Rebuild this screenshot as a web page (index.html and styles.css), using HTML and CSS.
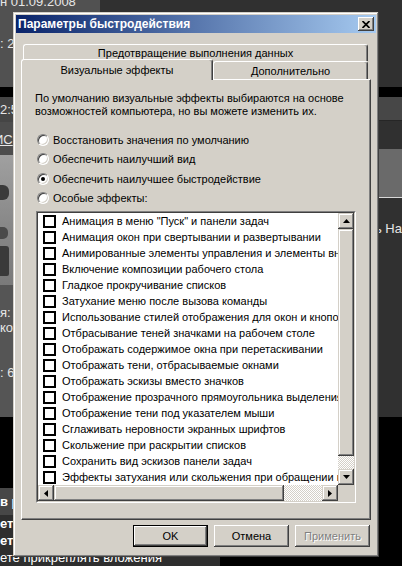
FILE: index.html
```html
<!DOCTYPE html>
<html lang="ru">
<head>
  <meta charset="UTF-8" />
  <meta name="viewport" content="width=device-width, initial-scale=1.0" />
  <title>Параметры быстродействия</title>
  <link rel="stylesheet" href="styles.css">
</head>
<body>
  <!-- окно программы под диалогом -->
  <div class="desk">
    <div class="desk-top">
      <div class="side">
        <div class="s-head"><span class="s-date">н 01.09.2008</span><span class="s-val">: 2</span></div>
        <div class="s-black"></div>
        <div class="s-time">2:5</div>
        <div class="s-link"><u>ИС</u></div>
        <div class="s-pic"><span class="blob b1"></span><span class="blob b2"></span><span class="blob b3"></span></div>
        <div class="s-info">я:<br>ко<br><br><br>: 6</div>
      </div>
      <div class="main">
        <div class="m-head"></div>
        <div class="m-black"></div>
        <div class="m-bar"></div>
        <div class="m-gap"></div>
        <div class="m-block"></div>
        <div class="m-text">ть На</div>
      </div>
    </div>
    <div class="desk-bottom">
      <div class="side wide">
        <div class="s-black tall"></div>
        <div class="s-strip">в р</div>
        <div class="s-lines"><b>ет</b><b>ет</b><span>ете прикреплять вложения</span></div>
      </div>
      <div class="main dark"></div>
    </div>
  </div>

  <div class="dialog">
    <div class="titlebar">
      <span class="title">Параметры быстродействия</span>
      <span class="close-btn">
        <svg width="8" height="7" viewBox="0 0 8 7"><path d="M0.5 0 L7.5 7 M7.5 0 L0.5 7" stroke="#000" stroke-width="1.7"/></svg>
      </span>
    </div>

    <div class="tabs">
      <div class="tab-row back">
        <div class="tab">Предотвращение выполнения данных</div>
      </div>
      <div class="tab-row front">
        <div class="tab active">Визуальные эффекты</div>
        <div class="tab">Дополнительно</div>
      </div>
    </div>

    <div class="panel">
      <p class="intro">По умолчанию визуальные эффекты выбираются на основе<br>возможностей компьютера, но вы можете изменить их.</p>

      <div class="radios">
        <div class="radio"><span class="radio-mark"></span>Восстановить значения по умолчанию</div>
        <div class="radio"><span class="radio-mark"></span>Обеспечить наилучший вид</div>
        <div class="radio checked"><span class="radio-mark"></span>Обеспечить наилучшее быстродействие</div>
        <div class="radio"><span class="radio-mark"></span>Особые эффекты:</div>
      </div>

      <div class="listbox">
        <div class="list-frame">
          <div class="items">
            <div class="item"><span class="check"></span>Анимация в меню "Пуск" и панели задач</div>
            <div class="item"><span class="check"></span>Анимация окон при свертывании и развертывании</div>
            <div class="item"><span class="check"></span>Анимированные элементы управления и элементы внутри окна</div>
            <div class="item"><span class="check"></span>Включение композиции рабочего стола</div>
            <div class="item"><span class="check"></span>Гладкое прокручивание списков</div>
            <div class="item"><span class="check"></span>Затухание меню после вызова команды</div>
            <div class="item"><span class="check"></span>Использование стилей отображения для окон и кнопок</div>
            <div class="item"><span class="check"></span>Отбрасывание теней значками на рабочем столе</div>
            <div class="item"><span class="check"></span>Отображать содержимое окна при перетаскивании</div>
            <div class="item"><span class="check"></span>Отображать тени, отбрасываемые окнами</div>
            <div class="item"><span class="check"></span>Отображать эскизы вместо значков</div>
            <div class="item"><span class="check"></span>Отображение прозрачного прямоугольника выделения</div>
            <div class="item"><span class="check"></span>Отображение тени под указателем мыши</div>
            <div class="item"><span class="check"></span>Сглаживать неровности экранных шрифтов</div>
            <div class="item"><span class="check"></span>Скольжение при раскрытии списков</div>
            <div class="item"><span class="check"></span>Сохранить вид эскизов панели задач</div>
            <div class="item"><span class="check"></span>Эффекты затухания или скольжения при обращении к подсказкам</div>
          </div>

          <div class="vscroll">
            <span class="sb-btn"><svg width="7" height="4" viewBox="0 0 7 4"><path d="M3.5 0 L7 4 L0 4 Z"/></svg></span>
            <span class="sb-thumb v"></span>
            <span class="sb-track"></span>
            <span class="sb-btn"><svg width="7" height="4" viewBox="0 0 7 4"><path d="M0 0 L7 0 L3.5 4 Z"/></svg></span>
          </div>

          <div class="hscroll">
            <span class="sb-btn"><svg width="4" height="7" viewBox="0 0 4 7"><path d="M0 3.5 L4 0 L4 7 Z"/></svg></span>
            <span class="sb-thumb h"></span>
            <span class="sb-track"></span>
            <span class="sb-btn"><svg width="4" height="7" viewBox="0 0 4 7"><path d="M0 0 L4 3.5 L0 7 Z"/></svg></span>
          </div>

          <div class="sb-corner"></div>
        </div>
      </div>
    </div>

    <div class="buttons">
      <button class="btn default">OK</button>
      <button class="btn">Отмена</button>
      <button class="btn" disabled>Применить</button>
    </div>
  </div>
</body>
</html>
```

FILE: styles.css
```css
* { box-sizing: border-box; }

body {
  margin: 0;
  width: 402px;
  height: 566px;
  overflow: hidden;
  position: relative;
  background: #303030;
  font-family: "Liberation Sans", Arial, sans-serif;
}

/* ---- программа на заднем плане ---- */

.desk {
  display: flex;
  flex-direction: column;
  height: 566px;
  color: #e6e6e6;
  font-size: 13px;
}

.desk-top, .desk-bottom { display: flex; }

.side { width: 110px; display: flex; flex-direction: column; }
.side.wide { width: 220px; }
.main { flex: 1; display: flex; flex-direction: column; }
.main.dark { background: #000; }

.s-head {
  height: 87px;
  background: #515151;
  display: flex;
  flex-direction: column;
  line-height: 15px;
  white-space: nowrap;
  overflow: hidden;
}
.s-date { margin-top: -6px; }
.s-val { margin-top: 27px; }

.s-black { height: 10px; background: #000; }
.s-black.tall { height: 71px; }

.s-time { height: 25px; background: #454545; line-height: 25px; }

.s-link { height: 33px; background: #4d4d4d; line-height: 36px; padding-left: 0; }
.s-link u { margin-left: -6px; }

.s-pic {
  height: 130px;
  background: linear-gradient(#a0a0a0, #858585 60%, #7a7a7a);
  display: flex;
  flex-direction: column;
  padding-top: 30px;
}
.blob { display: block; background: #3a3a3a; }
.b1 { width: 9px; height: 15px; border-radius: 0 6px 6px 0; }
.b2 { width: 8px; height: 12px; margin-top: 27px; border-radius: 0 5px 5px 0; background: #4a4a4a; }
.b3 { width: 9px; height: 30px; margin-top: 7px; border-radius: 0 3px 2px 0; }

.s-info { height: 132px; background: #555; line-height: 15px; padding-top: 20px; }

.m-head { height: 87px; background: #303030; }
.m-black { height: 10px; background: #000; }
.m-bar { height: 24px; background: #474747; border-bottom: 1px solid #262626; }
.m-gap { height: 28px; }
.m-block { height: 49px; background: #6a6a6a; border-bottom: 1px solid #d8d8d8; }
.m-text { height: 219px; padding: 23px 0 0 269px; white-space: nowrap; overflow: hidden; }

.s-strip {
  height: 27px;
  background: #474747;
  color: #fff;
  font-weight: bold;
  line-height: 27px;
}
.s-lines {
  height: 51px;
  background: #2e2e2e;
  color: #fff;
  display: flex;
  flex-direction: column;
  line-height: 17px;
  white-space: nowrap;
}

/* ---- диалог ---- */

.dialog {
  position: absolute;
  left: 13px;
  top: 12px;
  width: 366px;
  height: 545px;
  padding: 3px;
  background: #d4d0c8;
  box-shadow: inset -1px -1px #404040, inset 1px 1px #d4d0c8, inset -2px -2px #808080, inset 2px 2px #fff;
  display: flex;
  flex-direction: column;
  font-size: 11px;
  color: #000;
}

.titlebar {
  height: 18px;
  padding: 0 2px 0 2px;
  display: flex;
  align-items: center;
  justify-content: space-between;
  background: linear-gradient(to right, #0a246a, #a6caf0);
}

.title {
  color: #fff;
  font-weight: bold;
  font-size: 12px;
}

.close-btn {
  width: 16px;
  height: 14px;
  background: #d4d0c8;
  box-shadow: inset -1px -1px #404040, inset 1px 1px #fff, inset -2px -2px #808080;
  display: flex;
  align-items: center;
  justify-content: center;
}

.tabs {
  margin: 11px 5px 0 5px;
  display: flex;
  flex-direction: column;
}

.tab-row { display: flex; }
.tab-row.back { padding: 0 3px 0 2px; height: 17px; }
.tab-row.front { height: 18px; align-items: flex-end; }

.tab {
  background: #d4d0c8;
  border-top: 1px solid #fff;
  border-left: 1px solid #fff;
  border-right: 1px solid #404040;
  box-shadow: inset -1px 0 #808080;
  border-radius: 3px 3px 0 0;
  display: flex;
  align-items: center;
  justify-content: center;
  white-space: nowrap;
}

.back .tab { flex: 1; height: 17px; }
.front .tab { width: 155px; height: 18px; }
.front .tab.active {
  width: 192px;
  height: 21px;
  margin-bottom: -1px;
  position: relative;
  z-index: 1;
}

.panel {
  margin: 0 5px;
  height: 441px;
  border: 1px solid;
  border-color: #fff #404040 #404040 #fff;
  box-shadow: inset -1px -1px #808080;
  padding: 12px 13px 0 13px;
}

.intro {
  margin: 0;
  line-height: 13px;
  white-space: nowrap;
}

.radios {
  margin-top: 12px;
  padding-left: 2px;
}

.radio {
  height: 19.5px;
  display: flex;
  align-items: center;
}

.radio-mark {
  width: 12px;
  height: 12px;
  margin-right: 4px;
  border-radius: 50%;
  background: #fff;
  border: 1px solid;
  border-color: #808080 #fff #fff #808080;
  box-shadow: inset 1px 1px #404040, inset -1px -1px #d4d0c8;
  display: flex;
  align-items: center;
  justify-content: center;
}

.radio.checked .radio-mark::after {
  content: "";
  width: 4px;
  height: 4px;
  border-radius: 50%;
  background: #000;
}

.listbox {
  margin: 3px 0 0 1px;
  width: 320px;
  height: 292px;
  border: 1px solid;
  border-color: #808080 #fff #fff #808080;
}

.list-frame {
  height: 100%;
  border: 1px solid;
  border-color: #404040 #d4d0c8 #d4d0c8 #404040;
  background: #fff;
  display: grid;
  grid-template-columns: 300px 16px;
  grid-template-rows: 272px 16px;
}

.items { overflow: hidden; }

.item {
  height: 16px;
  padding-left: 5px;
  display: flex;
  align-items: center;
  white-space: nowrap;
}

.check {
  flex: none;
  width: 13px;
  height: 13px;
  margin-right: 6px;
  border: 2px solid #000;
  background: #fff;
}

.vscroll, .hscroll { display: flex; }
.vscroll { flex-direction: column; }

.sb-btn, .sb-thumb, .sb-corner { background: #d4d0c8; }

.sb-btn, .sb-thumb {
  flex: none;
  box-shadow: inset -1px -1px #404040, inset 1px 1px #d4d0c8, inset -2px -2px #808080, inset 2px 2px #fff;
}

.sb-btn {
  width: 16px;
  height: 16px;
  display: flex;
  align-items: center;
  justify-content: center;
}

.sb-thumb.v { height: 227px; }
.sb-thumb.h { width: 230px; }

.sb-track {
  flex: 1;
  background-color: #fff;
  background-image: conic-gradient(#d4d0c8 25%, #fff 0 50%, #d4d0c8 0 75%, #fff 0);
  background-size: 2px 2px;
}

/* ---- кнопки ---- */

.buttons {
  display: flex;
  justify-content: flex-end;
  gap: 6px;
  margin: 5px 6px 0 0;
}

.btn {
  width: 75px;
  height: 22px;
  padding: 0;
  border: none;
  background: #d4d0c8;
  font: 11px "Liberation Sans", Arial, sans-serif;
  color: #000;
  box-shadow: inset -1px -1px #404040, inset 1px 1px #fff, inset -2px -2px #808080;
}

.btn.default {
  box-shadow: inset 0 0 0 1px #000, inset -2px -2px #404040, inset 2px 2px #fff, inset -3px -3px #808080;
}

.btn:disabled {
  color: #808080;
  text-shadow: 1px 1px #fff;
}
```
